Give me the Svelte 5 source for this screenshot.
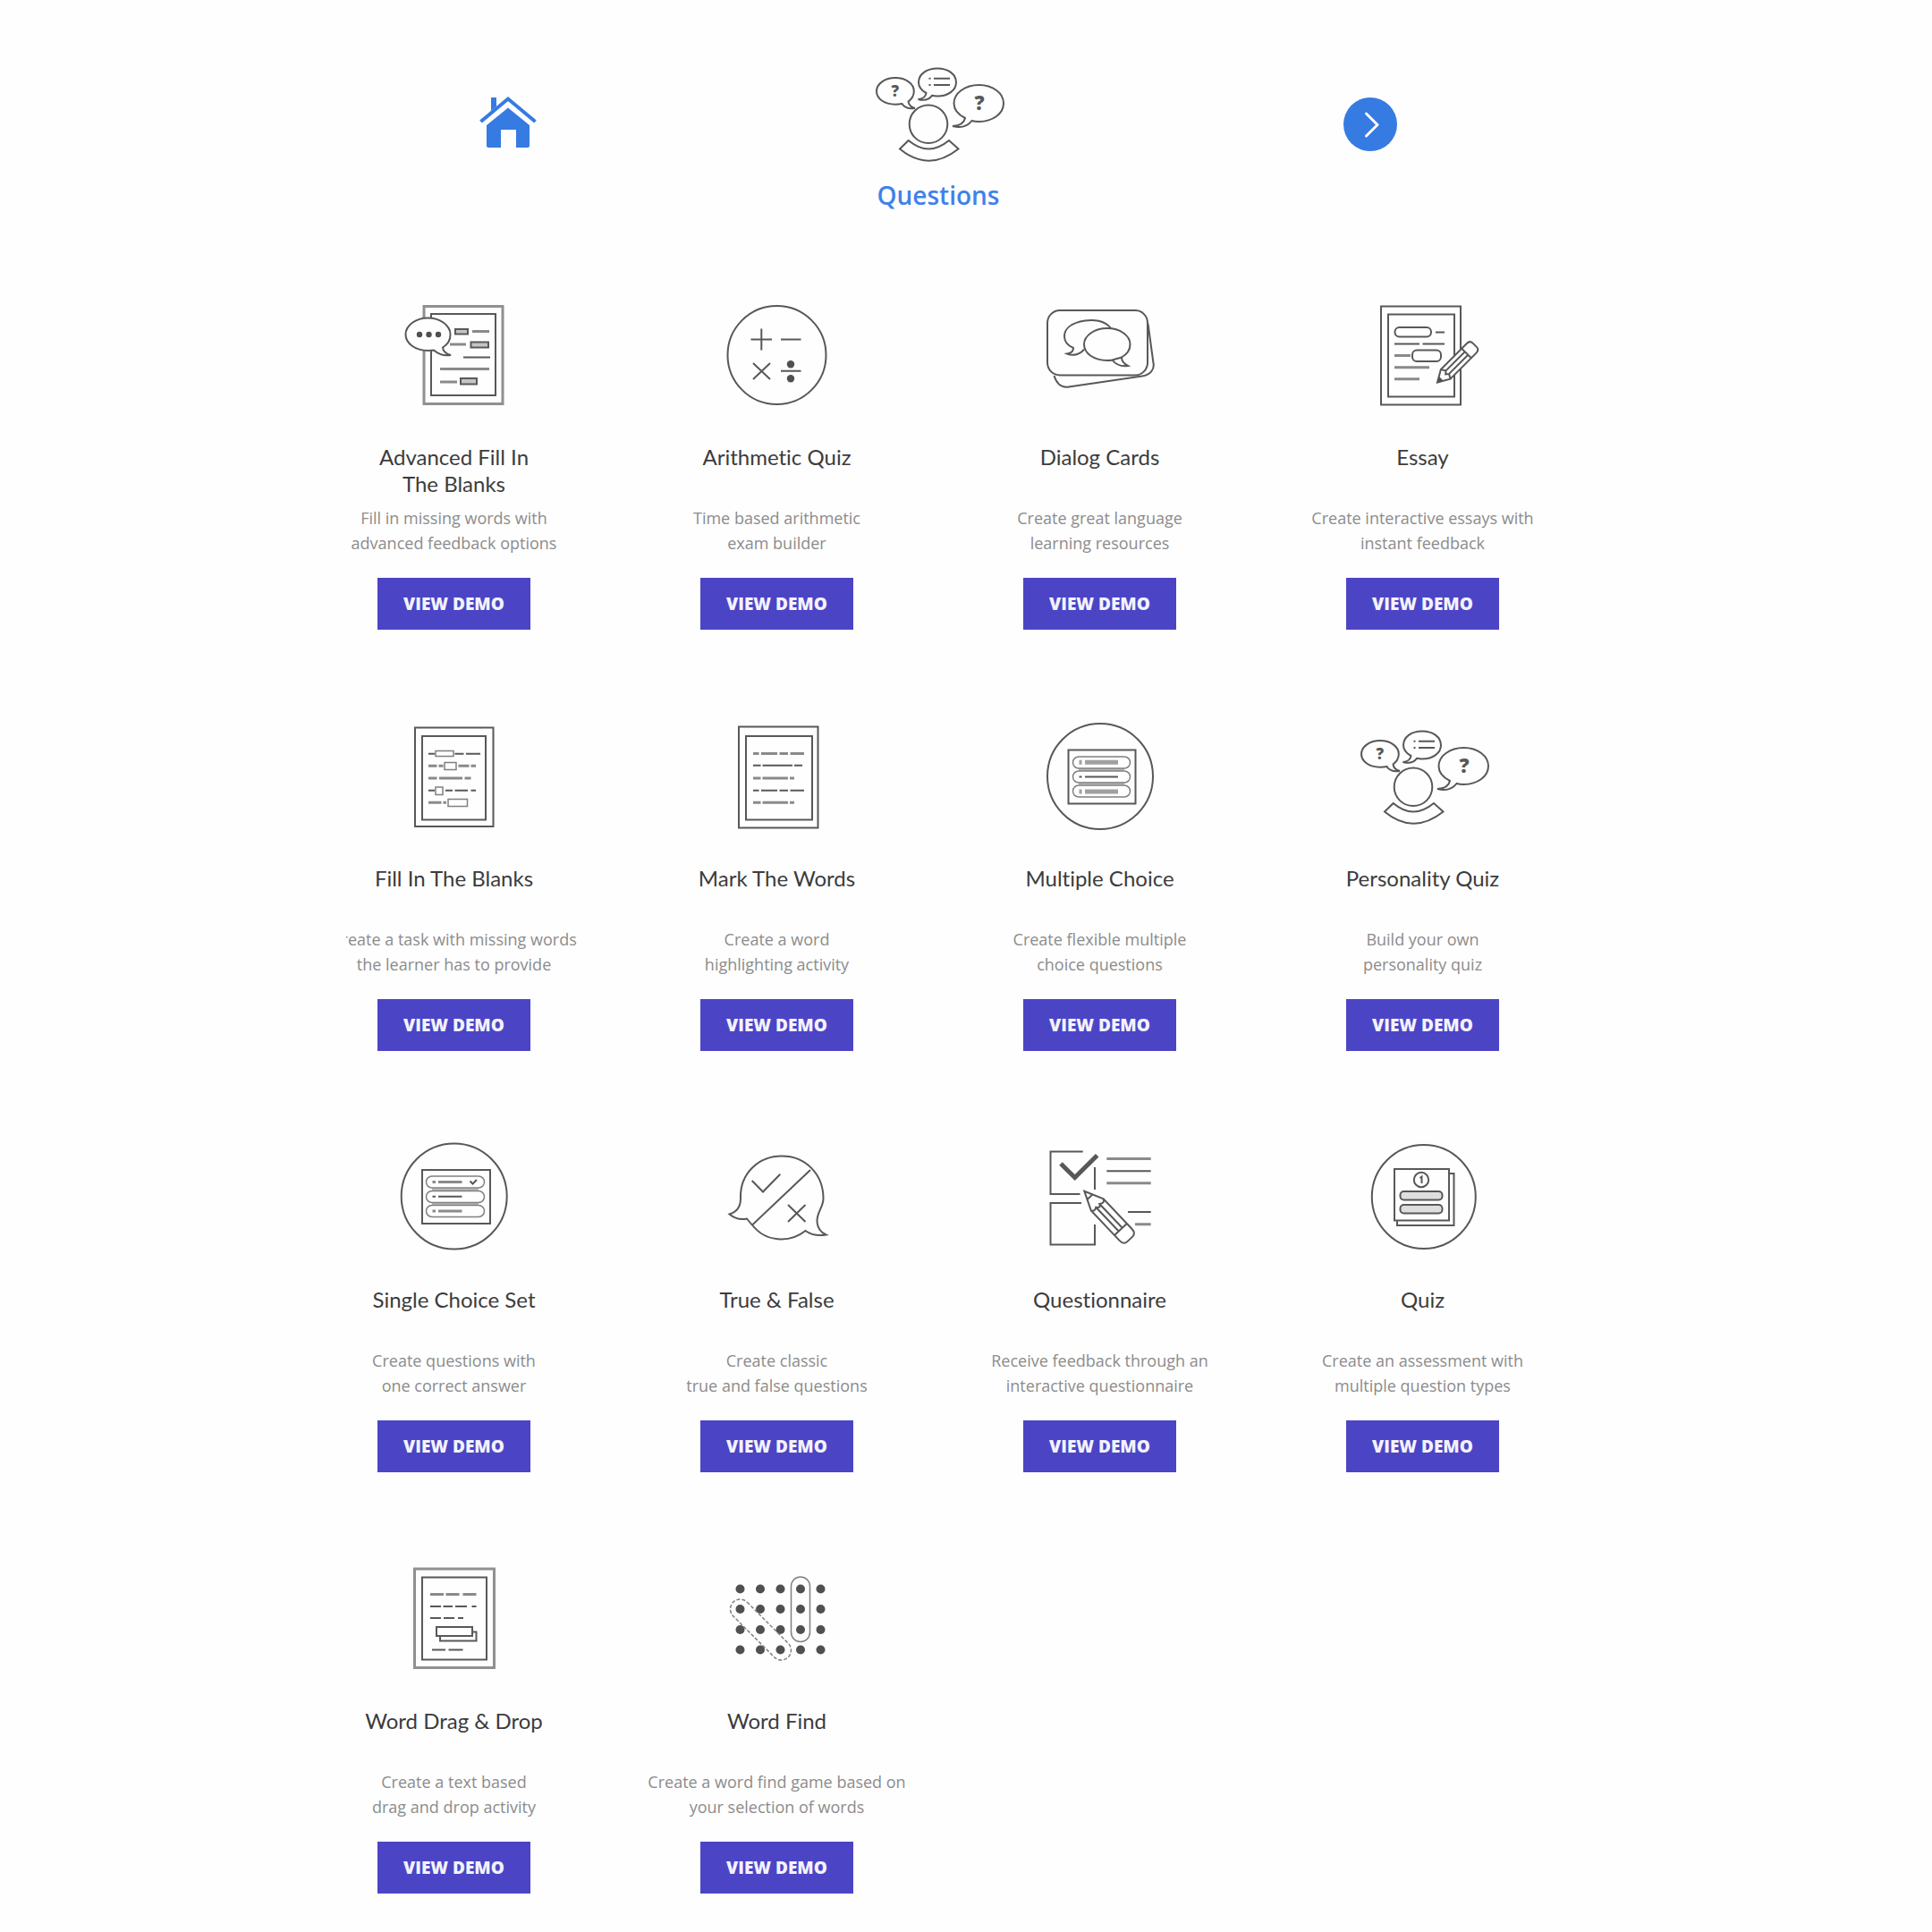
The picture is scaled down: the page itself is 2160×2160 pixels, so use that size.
<script>
  const cards = [
    { icon: 'advanced', title: ['Advanced Fill In', 'The Blanks'], text: ['Fill in missing words with', 'advanced feedback options'] },
    { icon: 'arithmetic', title: ['Arithmetic Quiz'], text: ['Time based arithmetic', 'exam builder'] },
    { icon: 'dialog', title: ['Dialog Cards'], text: ['Create great language', 'learning resources'] },
    { icon: 'essay', title: ['Essay'], text: ['Create interactive essays with', 'instant feedback'] },
    { icon: 'fill', title: ['Fill In The Blanks'], text: ['Create a task with missing words', 'the learner has to provide'] },
    { icon: 'mark', title: ['Mark The Words'], text: ['Create a word', 'highlighting activity'] },
    { icon: 'multiple', title: ['Multiple Choice'], text: ['Create flexible multiple', 'choice questions'] },
    { icon: 'personality', title: ['Personality Quiz'], text: ['Build your own', 'personality quiz'] },
    { icon: 'single', title: ['Single Choice Set'], text: ['Create questions with', 'one correct answer'] },
    { icon: 'truefalse', title: ['True & False'], text: ['Create classic', 'true and false questions'] },
    { icon: 'questionnaire', title: ['Questionnaire'], text: ['Receive feedback through an', 'interactive questionnaire'] },
    { icon: 'quiz', title: ['Quiz'], text: ['Create an assessment with', 'multiple question types'] },
    { icon: 'drag', title: ['Word Drag & Drop'], text: ['Create a text based', 'drag and drop activity'] },
    { icon: 'find', title: ['Word Find'], text: ['Create a word find game based on', 'your selection of words'] }
  ];
  const dotCols = [29.5, 52, 74.5, 97, 119.5];
  const dotRows = [33.5, 56, 79, 101.5];
</script>

{#snippet art(name)}
  <svg class="art" viewBox="0 0 141 130" width="141" height="130" aria-hidden="true">
    {#if name === 'advanced'}
      <rect x="37" y="12.5" width="88" height="109" class="soft" />
      <rect x="45" y="21" width="72" height="91" />
      <path class="bar" d="M91 40.5H110M66 55H84M55 82.5H110M55 97H74" />
      <path d="M81 69.5H111" />
      <rect x="72" y="38" width="14" height="5.5" class="tint" />
      <rect x="89.5" y="52.5" width="19.5" height="6" class="tint" />
      <rect x="78" y="93" width="18" height="6.5" class="tint" />
      <path class="paper" d="M48 61.5C52 65 58 68.5 67 67C62 66 58 62 58 58.5C63 55.5 66.5 50 66.5 44C66.5 34 55.5 25.5 41.5 25.5S16.5 34 16.5 44S27.5 62 41.5 62Z" />
      <g class="solid"><circle cx="32" cy="44" r="3.2" /><circle cx="42.5" cy="44" r="3.2" /><circle cx="53" cy="44" r="3.2" /></g>
    {:else if name === 'arithmetic'}
      <circle cx="70.5" cy="67" r="55" />
      <path d="M41.5 49.5H65M53.3 37.5V61.5M75 49.5H97.5M44 76L63 94M63 76L44 94M75 84.7H97.5" />
      <g class="solid"><circle cx="86" cy="77.3" r="4.2" /><circle cx="86" cy="93.3" r="4.2" /></g>
    {:else if name === 'dialog'}
      <path d="M19.5 90C22 98 27 104 36 102.5L118 90.5C127 89 132 83 130.5 76L124.5 32" />
      <rect x="12" y="17" width="112" height="72.5" rx="14" class="paper" />
      <path d="M83 37C76 28 63 27 54 28.5C38 31 31 38 31 46C31 51 34 56 41 59C41 63 38 65 34 65.5C42 69 50 65 53 60.5" />
      <path d="M84.5 72.5C88 77 94 80 102 79C98 77 95 74 95 69.5C101 66 104.5 61 104.5 55C104.5 45 93 37 79 37S53 45 53 55S64 73 79 73Q82 73 84.5 72.5L95 69.5" />
    {:else if name === 'essay'}
      <rect x="24" y="12.5" width="89" height="110" />
      <rect x="32" y="21.5" width="74" height="92" />
      <rect x="39.5" y="36" width="40.5" height="10.5" rx="5" />
      <rect x="59" y="61.5" width="32" height="12.5" rx="5" />
      <path d="M85 41.5H95M39 54.5H67M70.5 54.5H95" />
      <path class="bar" d="M39 67.5H57M39 80.7H78M39 93.7H67" />
      <g transform="translate(87 97.5) rotate(-45)">
        <path class="paper" d="M0 0L13 -7.5H54Q59 -7.5 59 -3V3Q59 7.5 54 7.5H13Z" />
        <path d="M13 -7.5L16 -2.5L13 0L16 2.5L13 7.5M15 -2.5H46M15 2.5H46M46 -7.5V7.5" />
        <path class="solid" d="M0 0L6 -3.5V3.5Z" />
      </g>
    {:else if name === 'fill'}
      <rect x="27" y="12.5" width="87.5" height="110.5" />
      <rect x="35" y="22" width="71" height="93.5" />
      <path d="M42 41.7H49M71.5 41.7H81.5M84 41.7H100M42 82.7H49M61 82.7H69M71.5 82.7H86M89.5 82.7H95" />
      <path class="bar" d="M42 55.3H51.5M53.5 55.3H58.5M75.5 55.3H87.5M89.5 55.3H95M42 69H51.5M54 69H80M82.5 69H89.5M42 96.3H56.5M58.5 96.3H62" />
      <g class="thin"><rect x="50" y="38.5" width="20" height="6" /><rect x="60" y="51.5" width="13" height="8" /><rect x="50" y="79" width="8" height="8.5" /><rect x="64" y="92.5" width="21.5" height="8" /></g>
    {:else if name === 'mark'}
      <rect x="28" y="11.5" width="88.5" height="113" />
      <rect x="36" y="22" width="74" height="93.5" />
      <path class="bar" d="M44 41.5H50.5M53 41.5H71M73.5 41.5H83M85.5 41.5H101M44 69H52.5M54.5 69H83M85 69H90M44 96.3H52.5M54.5 96.3H83M85 96.3H90" />
      <path d="M44 54.7H52.5M54.5 54.7H88M90 54.7H99M44 82.7H50.5M53 82.7H71M73.5 82.7H83M85.5 82.7H101" />
    {:else if name === 'multiple'}
      <circle cx="71" cy="67" r="59" />
      <rect x="35.5" y="37.5" width="75" height="60" />
      <path class="band" d="M47 59.5H98M47 75.3H98" />
      <g class="thin"><rect x="40.5" y="45" width="64" height="13" rx="6.5" /><rect x="40.5" y="61" width="64" height="13" rx="6.5" /><rect x="40.5" y="77" width="64" height="13" rx="6.5" /></g>
      <path class="heavy" d="M47.5 51.3H50.5M54 51.3H91M47.5 84H50.5M54 84H91" />
      <path d="M47.5 67.5H50.5M54 67.5H91" />
    {:else if name === 'personality'}
      <path d="M30.5 56C33 60 38 62 45 61C41 60 38 57 37.5 53.5C41.5 50.5 43.8 46.5 43.8 42C43.8 33.5 34.5 27 23 27S2 33.5 2 42S11 56.7 23 56.7Q27 56.7 30.5 56Z" />
      <path d="M57.5 44C57 48 54 50.5 48.5 51C56 53 61 51 64 46.8Q67 47.5 70 47.5C82 47.5 91 41 91 32S82 16.5 70 16.5S49 23 49 32C49 37 52 41 57.5 44Z" />
      <path d="M101 72C100 77 95 80.5 87 81C97 83.5 104 81 108.5 75Q112 76 116.5 76C132 76 144 67 144 55.5S132 35 116.5 35S88.5 44 88.5 55.5C88.5 62 93 68 101 72Z" />
      <path d="M60.5 27.7H62.5M66 27.7H84M60.5 35H62.5M66 35H84" />
      <text x="22.8" y="48" font-size="17">?</text>
      <text x="117" y="63" font-size="22">?</text>
      <circle cx="60" cy="78.8" r="21.3" />
      <path d="M37.7 97L28 106.5Q60 133 93.5 106.5L83 97Q60 116 37.7 97Z" />
    {:else if name === 'single'}
      <circle cx="70.7" cy="65.5" r="59" />
      <rect x="35" y="36" width="76" height="60" />
      <path class="band" d="M46 58H98M46 74H98" />
      <g class="thin"><rect x="39.5" y="43" width="65" height="13" rx="6.5" /><rect x="39.5" y="59.5" width="65" height="13" rx="6.5" /><rect x="39.5" y="75.5" width="65" height="13" rx="6.5" /></g>
      <path class="bar" d="M46.5 49.5H50M53 49.5H79.5M46.5 82H50M53 82H79.5" />
      <path d="M46.5 65.7H50M53 65.7H79.5M88.5 48.5L91.5 51.5L96 47" />
    {:else if name === 'truefalse'}
      <path d="M43 97.5C41 95.5 39 93 37 90.5C30 92 23 90 17.5 85.5C26 83 30 77 30 68C29 40 50 20.5 76 20.5C103 20.5 122.5 41 122.5 68C122.5 78 115 83 115.5 94C116 101 120 106 125.5 108.5C117 110 108 108 102.5 104C85 118 58 117 43 97.5L108 36" />
      <path d="M42.7 48L55 60.5L74.3 40.7M83 75L102.5 94M102.5 75L83 94" />
    {:else if name === 'questionnaire'}
      <path d="M51.7 15.5H15.5V63H48.5M65 33V58M50 73H15.5V119.5H65V97" />
      <path class="bar" d="M78.3 23.5H127.7M78.3 50.7H127.7M110 96.7H127.7" />
      <path d="M78.3 37.3H127.7M102 83H127.7" />
      <path class="tick" d="M27 29L42.7 44.5L67.7 19.7" />
      <g transform="translate(53.3 59.7) rotate(46.5)">
        <path class="paper" d="M0 0L21 -9.5H67Q74 -9.5 74 -4V4Q74 9.5 67 9.5H21Z" />
        <path d="M9 -4V4M21 -9.5Q26 -7 22 -2.5Q27 0 22 3Q25 7 21 9.5M22 -2.5H59M22 3H59M59 -9.5V9.5" />
      </g>
    {:else if name === 'quiz'}
      <circle cx="71.8" cy="66" r="58" />
      <path d="M100 40H105.5V98H42V93" />
      <rect x="39" y="35" width="61" height="57.5" class="paper" />
      <circle cx="69" cy="47" r="8.2" />
      <path d="M67.5 45L69.5 43.5V51" />
      <rect x="45.5" y="60" width="47" height="9.5" rx="4" class="pale" />
      <rect x="45.5" y="75" width="47" height="9.5" rx="4" class="pale" />
    {:else if name === 'drag'}
      <rect x="26.5" y="11" width="89" height="110.5" class="soft" />
      <rect x="35" y="20.5" width="72" height="92" />
      <path class="bar" d="M44 39.5H59M61.5 39.5H76.5M80.5 39.5H95.5" />
      <path d="M44 53H56M58.5 53H69M72 53H85M90.5 53H95.5M44 66H56M59 66H71M75 66H81M46 101.5H61M64.5 101.5H80.5" />
      <path d="M91 81.5H95.5V91.5H55V86" />
      <rect x="51" y="76" width="40" height="10" class="paper" />
    {:else if name === 'find'}
      <g class="solid">
        {#each dotRows as cy}
          {#each dotCols as cx}<circle {cx} {cy} r="5" />{/each}
        {/each}
      </g>
      <rect x="86.5" y="20" width="21" height="72.5" rx="10.5" class="thin" />
      <rect x="-11" y="-11" width="87" height="22" rx="11" class="thin dashed" transform="translate(29.5 56) rotate(45)" />
    {/if}
  </svg>
{/snippet}

<div class="page">
  <header>
    <a class="nav" href="#home" aria-label="Home">
      <svg viewBox="0 0 64 62" width="64" height="62" aria-hidden="true">
        <path class="blue" d="M13 2H19V12L13 17ZM32 13.5L56 33V56Q56 58 54 58H41V38H24V58H10Q8 58 8 56V33Z" />
        <path class="roof" d="M1.5 29L32 3.5L62.5 29" />
      </svg>
    </a>
    <div class="topic">
      {@render art('personality')}
      <h1>Questions</h1>
    </div>
    <a class="nav" href="#next" aria-label="Next">
      <svg viewBox="0 0 64 62" width="64" height="62" aria-hidden="true">
        <circle class="blue" cx="34" cy="32" r="30" />
        <path class="chevron" d="M29.5 20L42 32.5L29.5 45" />
      </svg>
    </a>
  </header>

  <main>
    {#each cards as card}
      <article>
        {@render art(card.icon)}
        <h2>{#each card.title as line}<span>{line}</span>{/each}</h2>
        <p>{#each card.text as line}<span>{line}</span>{/each}</p>
        <a class="demo" href="#{card.icon}">VIEW DEMO</a>
      </article>
    {/each}
  </main>
</div>

<style>
  :global(body) {
    margin: 0;
    background: #fefefe;
  }
  .page {
    padding: 60px 389px 43px 327px;
    font-family: 'Open Sans', 'Noto Sans', sans-serif;
  }
  header {
    display: grid;
    grid-template-columns: repeat(3, 1fr);
    justify-items: center;
    align-items: start;
    margin-bottom: 93px;
  }
  .nav {
    display: block;
    margin-top: 47px;
  }
  .nav svg {
    display: block;
  }
  .topic {
    display: flex;
    flex-direction: column;
    align-items: center;
    gap: 9px;
  }
  h1 {
    margin: 0;
    font-size: 28px;
    line-height: 38px;
    font-weight: 600;
    color: #3f82ea;
  }
  main {
    display: grid;
    grid-template-columns: repeat(4, 1fr);
    row-gap: 97px;
    clip-path: inset(0 0 0 60px);
  }
  article {
    display: flex;
    flex-direction: column;
    align-items: center;
    text-align: center;
    white-space: nowrap;
  }
  h2 {
    min-height: 60px;
    margin: 36px 0 9px;
    font-family: Lato, 'Open Sans', sans-serif;
    font-size: 24px;
    line-height: 30px;
    font-weight: 400;
    font-variant-ligatures: none;
    color: #3c3c3c;
  }
  p {
    margin: 0 0 25px;
    font-size: 18px;
    line-height: 28px;
    color: #8c8c8c;
  }
  h2 span,
  p span {
    display: block;
  }
  .demo {
    width: 171px;
    background: #4b45c6;
    color: #f3f2fc;
    font-size: 19px;
    line-height: 58px;
    font-weight: 800;
    text-decoration: none;
  }
  .art {
    display: block;
    overflow: visible;
    fill: none;
    stroke: #585858;
    stroke-width: 2;
  }
  .art text {
    font-weight: 800;
    fill: #585858;
    stroke: none;
    text-anchor: middle;
  }
  .soft {
    stroke: #909090;
    stroke-width: 3;
  }
  .paper {
    fill: #fefefe;
  }
  .tint {
    fill: #c4c4c4;
  }
  .pale {
    fill: #dedede;
  }
  .bar {
    stroke: #8a8a8a;
    stroke-width: 3;
  }
  .band {
    stroke: #b8b8b8;
    stroke-width: 3;
  }
  .heavy {
    stroke: #a0a0a0;
    stroke-width: 5;
  }
  .tick {
    stroke-width: 5;
  }
  .thin {
    stroke: #808080;
    stroke-width: 1.5;
  }
  .dashed {
    stroke-dasharray: 4 2;
  }
  .solid {
    fill: #505050;
    stroke: none;
  }
  .blue {
    fill: #367be2;
  }
  .roof {
    fill: none;
    stroke: #367be2;
    stroke-width: 4;
  }
  .chevron {
    fill: none;
    stroke: #fefefe;
    stroke-width: 3;
    stroke-linecap: round;
    stroke-linejoin: round;
  }
</style>
